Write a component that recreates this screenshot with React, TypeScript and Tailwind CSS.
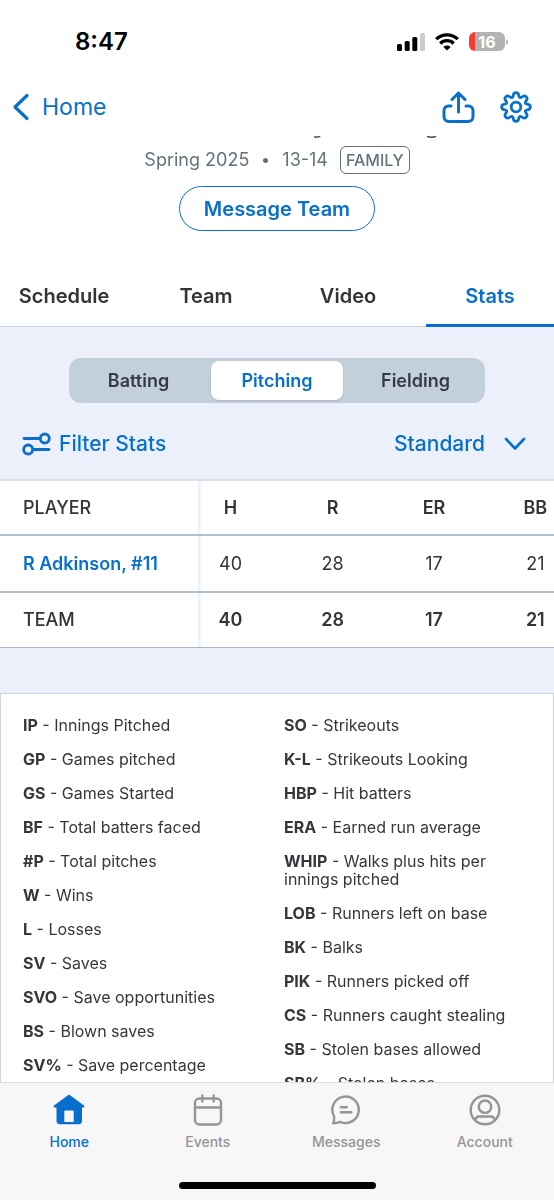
import React, { useState } from 'react';

const tabs = ['Schedule', 'Team', 'Video', 'Stats'];
const segments = ['Batting', 'Pitching', 'Fielding'];
const columns = ['H', 'R', 'ER', 'BB'];
const stats = [40, 28, 17, 21];

const legendLeft = [
  ['IP', 'Innings Pitched'],
  ['GP', 'Games pitched'],
  ['GS', 'Games Started'],
  ['BF', 'Total batters faced'],
  ['#P', 'Total pitches'],
  ['W', 'Wins'],
  ['L', 'Losses'],
  ['SV', 'Saves'],
  ['SVO', 'Save opportunities'],
  ['BS', 'Blown saves'],
  ['SV%', 'Save percentage'],
];

const legendRight = [
  ['SO', 'Strikeouts'],
  ['K-L', 'Strikeouts Looking'],
  ['HBP', 'Hit batters'],
  ['ERA', 'Earned run average'],
  ['WHIP', 'Walks plus hits per innings pitched'],
  ['LOB', 'Runners left on base'],
  ['BK', 'Balks'],
  ['PIK', 'Runners picked off'],
  ['CS', 'Runners caught stealing'],
  ['SB', 'Stolen bases allowed'],
  ['SB%', 'Stolen bases'],
];

const StatusBar = () => (
  <div className="flex h-[83px] shrink-0 items-center justify-between pl-[75px] pr-[46px] text-black">
    <span className="text-2xl font-semibold">8:47</span>
    <div className="flex items-center gap-[10px]">
      <svg width="28" height="18" viewBox="0 0 28 18">
        <rect x="0" y="11" width="5" height="7" rx="1.5" />
        <rect x="7.7" y="8" width="5" height="10" rx="1.5" />
        <rect x="15.3" y="4" width="5" height="14" rx="1.5" />
        <rect x="23" y="0" width="5" height="18" rx="1.5" fill="#cccccc" />
      </svg>
      <svg width="24" height="18" viewBox="0 0 24 18" fill="none" stroke="#000" strokeWidth="3.2">
        <path d="M1.2 6.2a15.4 15.4 0 0 1 21.6 0" />
        <path d="M5.2 10.5a9.7 9.7 0 0 1 13.6 0" />
        <path d="M12 17.6l-3.6-3.7a5.2 5.2 0 0 1 7.2 0z" fill="#000" stroke="none" />
      </svg>
      <div className="flex items-center gap-px">
        <span className="flex h-[19px] w-9 items-center justify-center rounded-md bg-linear-to-r from-[#fb3b30] from-17% to-[#b3b3b3] to-17% text-base font-bold text-white">16</span>
        <svg width="2" height="6" viewBox="0 0 2 6" fill="#b3b3b3">
          <path d="M0 0c1.3.6 2 1.7 2 3s-.7 2.4-2 3z" />
        </svg>
      </div>
    </div>
  </div>
);

const TopBar = () => (
  <header className="flex h-[53px] shrink-0 items-start justify-between pl-3 pr-[22px] text-[#0870cc]">
    <a href="#home" className="flex h-12 items-center gap-3 text-[23px]">
      <svg width="18" height="28" viewBox="0 0 18 28" fill="none" stroke="currentColor" strokeWidth="3.2" strokeLinecap="round" strokeLinejoin="round">
        <path d="M15 2.5L3 14l12 11.5" />
      </svg>
      Home
    </a>
    <div className="flex h-12 items-center gap-[25px]">
      <button type="button" aria-label="Share">
        <svg width="33" height="33" viewBox="0 0 33 33" fill="none" stroke="currentColor" strokeWidth="3" strokeLinecap="round" strokeLinejoin="round">
          <path d="M16.5 21V2.500M10 8.500l6.500-6.500L23 8.500" />
          <path d="M9 15H6.500C4 15 2 17 2 19.500v6c0 3 2 5 5 5h19c3 0 5-2 5-5v-6c0-2.500-2-4.500-4.500-4.500H24" />
        </svg>
      </button>
      <button type="button" aria-label="Settings">
        <svg width="32" height="32" viewBox="0 0 32 32" fill="none" stroke="currentColor" strokeWidth="2.8" strokeLinejoin="round">
          <path d="M13.500 3.700c.5-2.700 4.500-2.700 5 0l.5 1.800c.3 1 1.300 1.400 2.200.9l1.700-1c2.300-1.500 5.200 1.400 3.700 3.700l-1 1.700c-.5.900-.1 1.900.9 2.200l1.800.5c2.700.5 2.700 4.500 0 5l-1.800.5c-1 .3-1.400 1.300-.9 2.200l1 1.700c1.500 2.300-1.400 5.200-3.700 3.700l-1.700-1c-.9-.5-1.900-.1-2.200.9l-.5 1.800c-.5 2.700-4.500 2.700-5 0l-.5-1.800c-.3-1-1.300-1.400-2.200-.9l-1.700 1c-2.300 1.500-5.200-1.400-3.700-3.700l1-1.700c.5-.9.1-1.900-.9-2.200l-1.800-.5c-2.700-.5-2.700-4.500 0-5l1.800-.5c1-.3 1.400-1.300.9-2.200l-1-1.700c-1.500-2.300 1.400-5.200 3.700-3.700l1.700 1c.9.5 1.900.1 2.200-.9z" />
          <circle cx="16" cy="16" r="4.8" />
        </svg>
      </button>
    </div>
  </header>
);

const TeamInfo = () => (
  <section className="flex flex-col items-center text-[#64727e]">
    <div className="flex h-[10px] w-full justify-center pl-[197px]">
      <svg width="123" height="4" viewBox="0 0 123 4" fill="none" stroke="#4a5158" strokeWidth="1.6">
        <path d="M0 1h3c1.500 0 2.500-.4 3-1.200M113 .2c1 .8 2.500 1 4.500 1s3.500-.2 4.500-1" />
      </svg>
    </div>
    <div className="flex items-center text-lg">
      <span>Spring 2025</span>
      <span className="mx-[14px] size-[5px] rounded-full bg-[#64727e]" />
      <span>13-14</span>
      <span className="ml-3 flex h-7 items-center rounded-md border border-[#64727e] px-[5px] text-base font-medium">FAMILY</span>
    </div>
    <button type="button" className="mt-3 h-[45px] rounded-full border border-[#0870cc] px-6 text-xl font-semibold text-[#0870cc]">
      Message Team
    </button>
  </section>
);

const TeamTabs = () => (
  <nav className="mt-[35px] flex h-[61px] justify-between border-b border-[#c6d0da] text-xl font-semibold text-[#333438]">
    {tabs.map((tab) => (
      <a
        key={tab}
        href={`#${tab.toLowerCase()}`}
        className={
          tab === 'Stats'
            ? '-mb-px flex w-32 items-center justify-center border-b-[3px] border-[#0870cc] pt-[2px] text-[#0870cc]'
            : 'flex w-32 items-center justify-center'
        }
      >
        {tab}
      </a>
    ))}
  </nav>
);

const StatControls = () => {
  const [active, setActive] = useState('Pitching');

  return (
    <div className="pt-[31px]">
      <div className="mx-auto grid h-[45px] w-3/4 grid-cols-3 rounded-xl bg-[#c3cfdb] text-lg font-semibold text-[#333b47]">
        {segments.map((segment) => (
          <button
            key={segment}
            type="button"
            onClick={() => setActive(segment)}
            className={segment === active ? 'm-[3px] rounded-lg bg-white text-[#0870cc] shadow' : 'm-[3px] rounded-lg'}
          >
            {segment}
          </button>
        ))}
      </div>
      <div className="flex h-[76px] items-center justify-between pl-[22px] pr-[28px] pt-[6px] text-[21px] font-medium text-[#0870cc]">
        <button type="button" className="flex items-center gap-2">
          <svg width="29" height="24" viewBox="0 0 29 24" fill="none" stroke="currentColor" strokeWidth="2.8" strokeLinecap="round">
            <path d="M2 6.500h16M11 17.500h16" />
            <circle cx="22.8" cy="6.5" r="4.5" />
            <circle cx="6.2" cy="17.5" r="4.5" />
          </svg>
          Filter Stats
        </button>
        <button type="button" className="flex items-center gap-[19px]">
          Standard
          <svg width="22" height="14" viewBox="0 0 22 14" fill="none" stroke="currentColor" strokeWidth="2.6" strokeLinecap="round" strokeLinejoin="round">
            <path d="M2 2l9 9.500L20 2" />
          </svg>
        </button>
      </div>
    </div>
  );
};

const StatsTable = () => {
  // soft shadow along the right edge of the player column
  const nameCell = 'bg-[linear-gradient(to_left,#ffffff_0,#e6eef6_5px,transparent_5px)] pl-[23px] text-left';

  return (
    <div className="overflow-x-auto border-t-2 border-[#dae1ea] bg-white [scrollbar-width:none]">
      <table className="w-[586px] table-fixed text-center text-lg text-[#333438]">
        <colgroup>
          <col className="w-[203px]" />
          <col className="w-[79px]" />
          <col />
          <col />
          <col />
        </colgroup>
        <thead>
          <tr className="h-[54px] border-b-2 border-b-[#b3bfcd]">
            <th className={`${nameCell} font-medium`}>PLAYER</th>
            {columns.map((column) => (
              <th key={column} className="font-semibold nth-2:pr-6">{column}</th>
            ))}
          </tr>
        </thead>
        <tbody>
          <tr className="h-[57px] border-b-2 border-b-[#b3bfcd]">
            <th className={`${nameCell} font-semibold text-[#0870cc]`}>
              <a href="#player">R Adkinson, #11</a>
            </th>
            {stats.map((value, index) => (
              <td key={index} className="nth-2:pr-6">{value}</td>
            ))}
          </tr>
          <tr className="h-[55px] border-b border-b-[#a9b6c6] font-semibold">
            <th className={`${nameCell} font-medium`}>TEAM</th>
            {stats.map((value, index) => (
              <td key={index} className="nth-2:pr-6">{value}</td>
            ))}
          </tr>
        </tbody>
      </table>
    </div>
  );
};

const LegendColumn = ({ items }: { items: string[][] }) => (
  <ul className="flex flex-col gap-4 pr-6">
    {items.map(([abbr, label]) => (
      <li key={abbr}>
        <strong className="font-bold">{abbr}</strong> - {label}
      </li>
    ))}
  </ul>
);

const Legend = () => (
  <section className="mt-[45px] grid grid-cols-2 border border-[#cbd5e1] bg-white pl-[22px] pr-2 pt-[22px] pb-8 text-base/[18px] text-[#35373c]">
    <LegendColumn items={legendLeft} />
    <LegendColumn items={legendRight} />
  </section>
);

const navItems = [
  {
    label: 'Home',
    icon: (
      <svg width="32" height="32" viewBox="0 0 32 32" fill="currentColor">
        <path fillRule="evenodd" d="M14.600 1.500a2 2 0 0 1 2.800 0L31 11.500c1 .8.500 2-.6 2H29V27c0 2-1.300 3.300-3.300 3.300H6.800c-2 0-3.300-1.300-3.300-3.300V13.500H1.600c-1.100 0-1.600-1.200-.6-2zM12.300 16.500a1 1 0 0 0-1 1V28h9.400V17.500a1 1 0 0 0-1-1z" />
      </svg>
    ),
  },
  {
    label: 'Events',
    icon: (
      <svg width="32" height="32" viewBox="0 0 32 32" fill="none" stroke="currentColor" strokeWidth="2.4" strokeLinecap="round">
        <rect x="3" y="4.5" width="26" height="26" rx="4.5" />
        <path d="M3 13.500h26M10.300 1.500v6M21.700 1.500v6" />
      </svg>
    ),
  },
  {
    label: 'Messages',
    icon: (
      <svg width="32" height="32" viewBox="0 0 32 32" fill="none" stroke="currentColor" strokeWidth="2.4" strokeLinecap="round" strokeLinejoin="round">
        <path d="M3.200 29.200c1-2.500 1.200-4.500.8-7A13.200 13.200 0 1 1 10.500 28c-2.500.3-4.500 1.200-7.300 1.200z" />
        <path d="M10.800 13.200h6M10.800 18.200h10.500" />
      </svg>
    ),
  },
  {
    label: 'Account',
    icon: (
      <svg width="32" height="32" viewBox="0 0 32 32" fill="none" stroke="currentColor" strokeWidth="2.4">
        <circle cx="16" cy="16" r="14.3" />
        <circle cx="16" cy="12.7" r="6.2" />
        <path d="M6.500 26.500c0-3 2-4 4-4h11c2 0 4 1 4 4" />
      </svg>
    ),
  },
];

const BottomNav = () => (
  <nav className="h-[118px] shrink-0 border-t border-[#dcdfe2] bg-[#f7f7f7] text-sm font-medium">
    <div className="grid h-[99px] grid-cols-4 pt-[11px] text-[#959595]">
      {navItems.map(({ label, icon }) => (
        <a
          key={label}
          href={`#${label.toLowerCase()}`}
          className={label === 'Home' ? 'flex flex-col items-center gap-[6px] text-[#0870cc]' : 'flex flex-col items-center gap-[6px]'}
        >
          {icon}
          {label}
        </a>
      ))}
    </div>
    <div className="mx-auto h-[7px] w-[197px] rounded-full bg-black" />
  </nav>
);

const App = () => (
  <div className="flex h-screen flex-col bg-white font-['Inter',sans-serif]">
    <StatusBar />
    <TopBar />
    <main className="min-h-0 flex-1 overflow-x-hidden overflow-y-auto [scrollbar-width:none]">
      <TeamInfo />
      <TeamTabs />
      <div className="bg-[#ebf0fa]">
        <StatControls />
        <StatsTable />
        <Legend />
      </div>
    </main>
    <BottomNav />
  </div>
);

export default App;
